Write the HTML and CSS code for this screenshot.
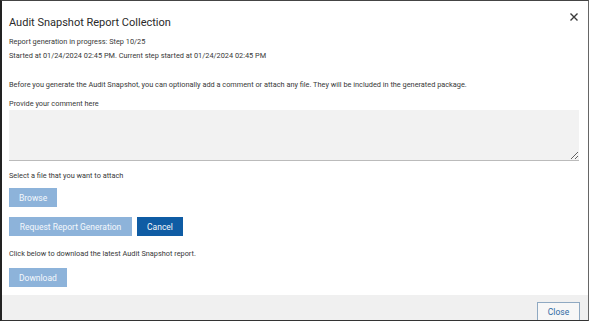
FILE: index.html
```html
<!DOCTYPE html>
<html lang="en">
<head>
  <meta charset="UTF-8" />
  <title>Audit Snapshot Report Collection</title>
  <link rel="stylesheet" href="styles.css">
</head>
<body>
  <div class="dialog">
    <div class="dialog-body">
      <div class="header">
        <h1>Audit Snapshot Report Collection</h1>
        <button class="btn-x" aria-label="Close">
          <svg width="10" height="10" viewBox="0 0 10 10"><path d="M1.5 1.5 L8.5 8.5 M8.5 1.5 L1.5 8.5" stroke="#3a3a3a" stroke-width="1.4" fill="none"/></svg>
        </button>
      </div>
      <p class="status first">Report generation in progress: Step 10/25</p>
      <p class="status">Started at 01/24/2024 02:45 PM. Current step started at 01/24/2024 02:45 PM</p>

      <p class="intro">Before you generate the Audit Snapshot, you can optionally add a comment or attach any file. They will be included in the generated package.</p>

      <label class="lbl-comment" for="comment">Provide your comment here</label>
      <textarea id="comment" class="comment"></textarea>

      <p class="lbl-file">Select a file that you want to attach</p>
      <div class="row row-browse">
        <button class="btn btn-light">Browse</button>
      </div>
      <div class="row row-actions">
        <button class="btn btn-light btn-wide">Request Report Generation</button>
        <button class="btn btn-dark">Cancel</button>
      </div>

      <p class="lbl-download">Click below to download the latest Audit Snapshot report.</p>
      <div class="row">
        <button class="btn btn-light">Download</button>
      </div>
    </div>
    <div class="footer">
      <button class="btn-close">Close</button>
    </div>
  </div>
</body>
</html>
```

FILE: styles.css
```css
html, body {
  margin: 0;
  padding: 0;
  background: #fff;
}
body {
  font-family: Roboto, "Liberation Sans", Arial, sans-serif;
  color: #333;
}
.dialog {
  width: 586px;
  height: 319px;
  border-top: 1px solid #444;
  border-left: 2px solid #222;
  border-right: 1px solid #666;
  border-bottom: 1px solid #333;
  display: flex;
  flex-direction: column;
  overflow: hidden;
  background: #fff;
}
.dialog-body {
  flex: 1;
  padding: 0 9px 0 7px;
  display: flex;
  flex-direction: column;
  align-items: flex-start;
}
.header {
  width: 100%;
  display: flex;
  justify-content: space-between;
  margin-top: 12px;
}
h1 {
  margin: 0;
  font-size: 11px;
  line-height: 20px;
  font-weight: 400;
  color: #2a2a2a;
}
.btn-x {
  border: none;
  background: none;
  padding: 0;
  margin: -3px 0 0 0;
  height: 12px;
  cursor: pointer;
}
p, label {
  margin: 0;
  font-size: 7.35px;
  line-height: 14px;
  color: #383838;
}
.status.first { margin-top: 2px; }
.intro { margin-top: 15px; }
.lbl-comment {
  margin-top: 6px;
  line-height: 12px;
  display: block;
}
.comment {
  box-sizing: border-box;
  width: 570px;
  height: 51px;
  margin: 0;
  border: none;
  border-bottom: 1px solid #bbb;
  background: #f2f2f2;
  resize: vertical;
}
.lbl-file { margin-top: 8px; }
.row {
  display: flex;
  gap: 5px;
}
.row-browse { margin-top: 5px; }
.row-actions { margin-top: 10px; }
.lbl-download { margin-top: 11px; margin-bottom: 7px; }
.btn {
  height: 19px;
  border: none;
  padding: 0 10px;
  font-family: Roboto, "Liberation Sans", Arial, sans-serif;
  font-size: 8.5px;
  color: #f4f8fc;
  white-space: nowrap;
  cursor: pointer;
}
.btn-light { background-color: #8db3da; }
.btn-wide { width: 123px; padding: 0; }
.btn-dark { background-color: #0f5ca4; width: 46px; padding: 0; }
.footer {
  box-sizing: border-box;
  height: 25px;
  background: #f0f0f0;
  display: flex;
  justify-content: flex-end;
  align-items: flex-start;
  padding: 7px 8px 0 0;
  overflow: hidden;
}
.btn-close {
  flex-shrink: 0;
  width: 43px;
  height: 22px;
  border: 1px solid #8fa9c2;
  background: #f7f7f7;
  color: #2f6aa3;
  font-family: Roboto, "Liberation Sans", Arial, sans-serif;
  font-size: 8.5px;
  padding: 0 0 2px 0;
  cursor: pointer;
}
```
